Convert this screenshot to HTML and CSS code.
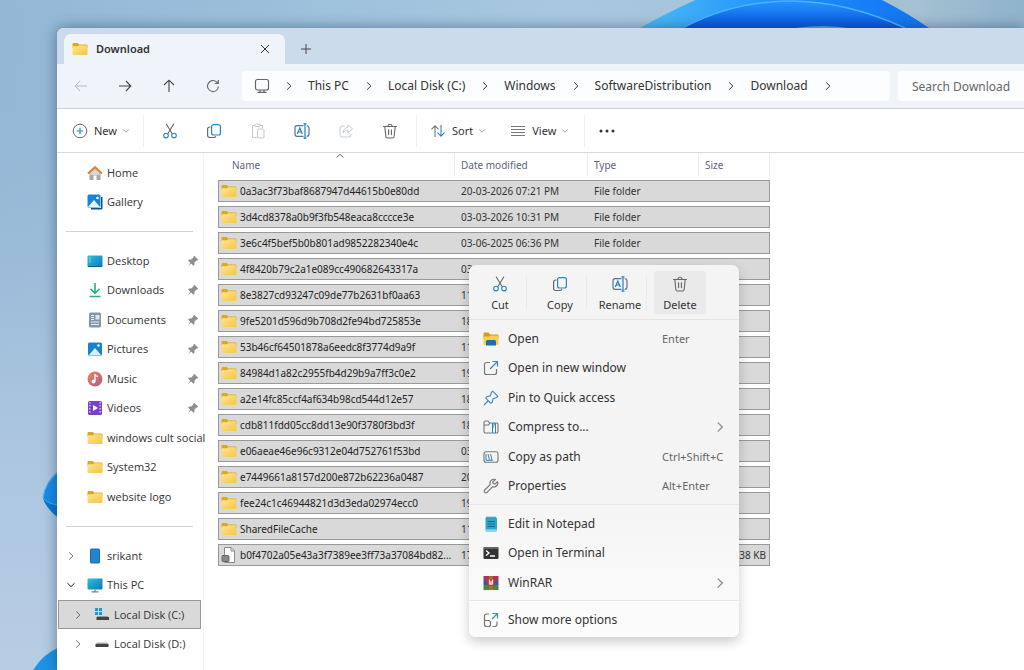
FILE: index.html
```html
<!DOCTYPE html>
<html lang="en">
<head>
<meta charset="utf-8">
<meta name="viewport" content="width=device-width, initial-scale=1">
<title>Download</title>
<link rel="stylesheet" href="styles.css">
</head>
<body>
<svg class="sprite" aria-hidden="true">
  <defs>
    <linearGradient id="g-folder" x1="0" y1="0" x2="1" y2="1"><stop offset="0" stop-color="#ffe590"/><stop offset="1" stop-color="#f6c544"/></linearGradient>
    <linearGradient id="g-blue" x1="0" y1="0" x2="1" y2="1"><stop offset="0" stop-color="#2fc0d8"/><stop offset="1" stop-color="#0b78bf"/></linearGradient>
    <linearGradient id="g-music" x1="0" y1="0" x2="1" y2="1"><stop offset="0" stop-color="#e8895c"/><stop offset="1" stop-color="#b05a88"/></linearGradient>
  </defs>
  <symbol id="folder" viewBox="0 0 16 14"><path d="M0.500 2a1 1 0 0 1 1-1h4.200l1.600 1.600h7.200a1 1 0 0 1 1 1V6H.500z" fill="#dba921"/><path d="M.500 5.200a1 1 0 0 1 1-1H5.800l1.400-1h7.300a1 1 0 0 1 1 1V12a1 1 0 0 1-1 1h-13a1 1 0 0 1-1-1z" fill="url(#g-folder)"/></symbol>
  <symbol id="cut" viewBox="0 0 16 16" fill="none" stroke-width="1.100" stroke-linecap="round"><path d="M4.300 1l5.900 9.700M11.700 1L5.800 10.700" stroke="#666"/><circle cx="4" cy="12.600" r="2.300" stroke="#2887c4"/><circle cx="12" cy="12.600" r="2.300" stroke="#2887c4"/></symbol>
  <symbol id="copy" viewBox="0 0 16 16" fill="none" stroke-width="1.200"><path d="M4.500 4H3.600A2 2 0 0 0 1.600 6v6.500a2 2 0 0 0 2 2H8a2 2 0 0 0 1.800-1.300" stroke="#666"/><rect x="5.600" y="1.600" width="8.800" height="10.400" rx="2" stroke="#2887c4"/></symbol>
  <symbol id="paste" viewBox="0 0 16 16" fill="none" stroke="#c3cbd0"><path d="M5 2.500H2.500v12H7M10 2.500h2.500V5"/><rect x="5" y="1" width="5" height="2.600" rx="1"/><rect x="7.500" y="6" width="6.500" height="9" rx="1"/></symbol>
  <symbol id="rename" viewBox="0 0 16 16" fill="none" stroke-width="1.200"><path d="M9.500 2.700H3a2 2 0 0 0-2 2v6.600a2 2 0 0 0 2 2h6.500M12.700 2.700a2.300 2.300 0 0 1 2.300 2v6.600a2.300 2.300 0 0 1-2.300 2" stroke="#56738a"/><path d="M11 1v14M9.500 .800h3M9.500 15.200h3M3.300 10.900L5.800 5l2.500 5.900M4.200 9h3.200" stroke="#1f7fc4"/></symbol>
  <symbol id="share" viewBox="0 0 16 16" fill="none" stroke="#c3cfd6"><path d="M6.500 3H4a2 2 0 0 0-2 2v7a2 2 0 0 0 2 2h7a2 2 0 0 0 2-2v-1"/><path d="M10 2l4.500 3.800L10 9.500V7.300C7.500 7.300 6 8.200 5 10c.200-3.200 2-5.300 5-5.800z"/></symbol>
  <symbol id="trash" viewBox="0 0 16 16" fill="none" stroke="#666" stroke-width="1.100" stroke-linecap="round"><path d="M1.500 3.500h13M6 3.300a2 2 0 0 1 4 0M2.800 3.700l1.100 10a1.500 1.500 0 0 0 1.500 1.300h5.200a1.500 1.500 0 0 0 1.500-1.300l1.100-10M6.600 6.800v4.800M9.400 6.800v4.800"/></symbol>
  <symbol id="right" viewBox="0 0 8 8" fill="none" stroke="currentColor" stroke-linecap="round"><path d="M2.500.700L5.900 4 2.500 7.300"/></symbol>
  <symbol id="down" viewBox="0 0 8 8" fill="none" stroke="currentColor" stroke-linecap="round"><path d="M.700 2.400L4 5.600l3.300-3.200"/></symbol>
  <symbol id="pin" viewBox="0 0 12 12"><path d="M7.200.700l4.100 4.100-1 .800-.700-.100L7.500 7.600l-.100 2.300-.900.900L4 8.400.800 11.300l2.500-3.500L1.100 5.500l1-.900 2.200-.100 2.200-2.200-.100-.800z" fill="#8b8f93"/></symbol>
</svg>

<svg class="wallpaper" viewBox="0 0 1024 670" preserveAspectRatio="xMinYMin slice" aria-hidden="true">
  <defs>
    <linearGradient id="sky" x1="0" y1="0" x2="1" y2="0"><stop offset="0" stop-color="#93b7d5"/><stop offset=".25" stop-color="#9bbfdb"/><stop offset=".55" stop-color="#a8c8e0"/><stop offset=".9" stop-color="#a4c0d2"/><stop offset="1" stop-color="#8eb3cb"/></linearGradient>
    <linearGradient id="side" x1="0" y1="0" x2="0" y2="1"><stop offset="0" stop-color="#8fb4d3" stop-opacity="0"/><stop offset=".6" stop-color="#a9c4df"/><stop offset="1" stop-color="#b7cde4"/></linearGradient>
    <linearGradient id="p1" x1="0" y1="0" x2="1" y2="0"><stop offset="0" stop-color="#4dbcf6"/><stop offset=".5" stop-color="#1c8dfb"/><stop offset="1" stop-color="#1374f2"/></linearGradient>
    <linearGradient id="p2" x1="0" y1="0" x2="0" y2="1"><stop offset="0" stop-color="#2495ff"/><stop offset="1" stop-color="#0753de"/></linearGradient>
  </defs>
  <rect width="1024" height="670" fill="url(#sky)"/>
  <rect width="60" height="670" fill="url(#side)"/>
  <path d="M640 28Q668 12 700-2H878Q906 12 929 28z" fill="url(#p1)"/>
  <path d="M684 28Q734 1 790 1T905 28z" fill="url(#p2)"/>
  <path d="M684 27Q734 1 790 1T905 28" fill="none" stroke="#48b3ff" stroke-width="1.500"/>
  <path d="M795 28q28-4 53 0z" fill="#55a8fb"/>
  <path d="M60 470Q45 481 43 498q2 9 17 21z" fill="#178be9"/>
  <path d="M43 498q6 7 17 7v14Q47 510 43 498" fill="#0876d2"/>
  <path d="M43 498q6 7 17 7M60 471Q45 482 43 498" fill="none" stroke="#43b4f6"/>
  <path d="M60 647q-18 7-28 25h28z" fill="#1e93e4"/>
</svg>

<main class="window">
  <header class="tabs">
    <div class="tab">
      <svg class="i16"><use href="#folder"/></svg>
      <span class="tab-title">Download</span>
      <button class="plain" aria-label="Close tab"><svg class="i10" viewBox="0 0 10 10"><path d="M1 1l8 8M9 1L1 9" stroke="#333" fill="none"/></svg></button>
    </div>
    <button class="plain new-tab" aria-label="New tab"><svg class="i10" viewBox="0 0 10 10"><path d="M5 0v10M0 5h10" stroke="#444" fill="none"/></svg></button>
  </header>

  <nav class="nav" aria-label="Address">
    <div class="nav-buttons">
      <button class="plain" aria-label="Back" disabled><svg class="i14" viewBox="0 0 14 14"><path d="M13 7H1.500M6 2L1.200 7 6 12" stroke="#b3b9c0" fill="none"/></svg></button>
      <button class="plain" aria-label="Forward"><svg class="i14" viewBox="0 0 14 14"><path d="M1 7h11.500M8 2l4.800 5L8 12" stroke="#444" stroke-width="1.100" fill="none"/></svg></button>
      <button class="plain" aria-label="Up"><svg class="i14" viewBox="0 0 14 14"><path d="M7 13V1.500M2 6l5-4.800L12 6" stroke="#444" stroke-width="1.100" fill="none"/></svg></button>
      <button class="plain" aria-label="Refresh"><svg class="i14" viewBox="0 0 14 14"><path d="M12.500 7.500a5.500 5.500 0 1 1-1.800-4.500l1.300 1.200M12.300 1v3.500H8.800" stroke="#666" stroke-width="1.100" fill="none"/></svg></button>
    </div>
    <div class="address">
      <svg class="i16" viewBox="0 0 16 16"><rect x="1.500" y="1.500" width="13" height="10.500" rx="2" fill="none" stroke="#666" stroke-width="1.200"/><path d="M3.500 14.300h9M6 12v2M10 12v2" stroke="#666" stroke-width="1.200"/></svg>
      <svg class="i8"><use href="#right"/></svg><a href="#">This PC</a>
      <svg class="i8"><use href="#right"/></svg><a href="#">Local Disk (C:)</a>
      <svg class="i8"><use href="#right"/></svg><a href="#">Windows</a>
      <svg class="i8"><use href="#right"/></svg><a href="#">SoftwareDistribution</a>
      <svg class="i8"><use href="#right"/></svg><a href="#">Download</a>
      <svg class="i8"><use href="#right"/></svg>
    </div>
    <input class="search" type="search" placeholder="Search Download" aria-label="Search Download">
  </nav>

  <div class="toolbar" role="toolbar" aria-label="Commands">
    <div class="tool-group new-group">
      <button class="plain labelled"><svg class="i16" viewBox="0 0 16 16" fill="none"><circle cx="8" cy="8" r="6.800" stroke="#666"/><path d="M8 4.800v6.400M4.800 8h6.400" stroke="#2887c4" stroke-width="1.200"/></svg>New<svg class="i6"><use href="#down"/></svg></button>
    </div>
    <div class="tool-group icon-group">
      <button class="plain" aria-label="Cut"><svg class="i16"><use href="#cut"/></svg></button>
      <button class="plain" aria-label="Copy"><svg class="i16"><use href="#copy"/></svg></button>
      <button class="plain" aria-label="Paste" disabled><svg class="i16"><use href="#paste"/></svg></button>
      <button class="plain" aria-label="Rename"><svg class="i16"><use href="#rename"/></svg></button>
      <button class="plain" aria-label="Share" disabled><svg class="i16"><use href="#share"/></svg></button>
      <button class="plain" aria-label="Delete"><svg class="i16"><use href="#trash"/></svg></button>
    </div>
    <div class="tool-group view-group">
      <button class="plain labelled"><svg class="i16" viewBox="0 0 16 16" fill="none"><path d="M5 14V3M1.500 6.300L5 2.800l3.500 3.500" stroke="#777" stroke-width="1.100"/><path d="M11 2v11M7.500 9.700L11 13.200l3.500-3.500" stroke="#2887c4" stroke-width="1.100"/></svg>Sort<svg class="i6"><use href="#down"/></svg></button>
      <button class="plain labelled"><svg class="i16" viewBox="0 0 16 16"><path d="M1 3.500h14M1 6.500h14M1 9.500h14M1 12.500h14" stroke="#777"/></svg>View<svg class="i6"><use href="#down"/></svg></button>
    </div>
    <button class="plain more" aria-label="See more"><svg class="i16" viewBox="0 0 16 16" fill="#333"><circle cx="2" cy="8" r="1.500"/><circle cx="8" cy="8" r="1.500"/><circle cx="14" cy="8" r="1.500"/></svg></button>
  </div>

  <div class="body">
    <nav class="sidebar" aria-label="Places">
      <ul>
        <li><svg class="i16" viewBox="0 0 16 16"><path d="M2.500 8L8 3l5.500 5v7h-4v-4.500h-3V15h-4z" fill="#a5a8ac"/><path d="M3.500 7.500L8 4l4.500 3.500V10h-9z" fill="#d5d7d9"/><path d="M1 8.600L8 2.200l7 6.400" fill="none" stroke="#dc843c" stroke-width="2"/></svg><a href="#">Home</a></li>
        <li><svg class="i16" viewBox="0 0 16 16"><path d="M14 3h1.500v11a1.500 1.500 0 0 1-1.500 1.500H4V14h10z" fill="#174f80"/><rect x=".500" y=".500" width="13" height="13" rx="1.500" fill="#1685d2"/><path d="M1 13l6-7 6 7z" fill="#e8f5fc"/><circle cx="10.500" cy="4" r="1.300" fill="#fff"/></svg><a href="#">Gallery</a></li>
      </ul>
      <hr>
      <ul>
        <li><svg class="i16" viewBox="0 0 16 16"><rect x=".500" y="2.500" width="15" height="11.500" rx="1" fill="url(#g-blue)"/><path d="M2.500 5h1M2.500 7h1M2.500 9h1" stroke="#d5f3f8"/><path d="M1 13.500h14" stroke="#096391"/></svg><a href="#">Desktop</a><svg class="i12"><use href="#pin"/></svg></li>
        <li><svg class="i16" viewBox="0 0 16 16"><path d="M8 1v10M3.500 6.800L8 11.300l4.500-4.500M2.500 14.500h11" fill="none" stroke="#29ad8b" stroke-width="1.600"/></svg><a href="#">Downloads</a><svg class="i12"><use href="#pin"/></svg></li>
        <li><svg class="i16" viewBox="0 0 16 16"><rect x="2" y=".500" width="12" height="15" rx="1.500" fill="#8397ab"/><path d="M4 3.500h3M4 5.500h3M4 7.500h3M4 10h8M4 12.500h8" stroke="#e7edf3"/><rect x="8.500" y="3" width="4" height="4.500" fill="#dbe7ef"/></svg><a href="#">Documents</a><svg class="i12"><use href="#pin"/></svg></li>
        <li><svg class="i16" viewBox="0 0 16 16"><rect x="1" y="1.500" width="14" height="13" rx="1.500" fill="#1683cc"/><path d="M2 14l6-7 6 7z" fill="#dcf0fa"/><circle cx="11.500" cy="4.500" r="1.300" fill="#fff"/></svg><a href="#">Pictures</a><svg class="i12"><use href="#pin"/></svg></li>
        <li><svg class="i16" viewBox="0 0 16 16"><circle cx="8" cy="8" r="7.500" fill="url(#g-music)"/><path d="M8 3v7.500M8 3.500q1 1.800 3 2" stroke="#fff" stroke-width="1.300" fill="none"/><circle cx="6.500" cy="10.500" r="1.900" fill="#fff"/></svg><a href="#">Music</a><svg class="i12"><use href="#pin"/></svg></li>
        <li><svg class="i16" viewBox="0 0 16 16"><rect x="1" y="1" width="14" height="14" rx="1.500" fill="#7b42c9"/><path d="M2.800 2v12M13.200 2v12" stroke="#d4b8f5" stroke-width="1.500" stroke-dasharray="1.500 1.500"/><path d="M6 5l5 3-5 3z" fill="#fff"/></svg><a href="#">Videos</a><svg class="i12"><use href="#pin"/></svg></li>
        <li><svg class="i16"><use href="#folder"/></svg><a href="#">windows cult social</a></li>
        <li><svg class="i16"><use href="#folder"/></svg><a href="#">System32</a></li>
        <li><svg class="i16"><use href="#folder"/></svg><a href="#">website logo</a></li>
      </ul>
      <hr>
      <ul class="tree">
        <li><svg class="i8"><use href="#right"/></svg><svg class="i16" viewBox="0 0 16 16"><rect x="3" y=".500" width="10" height="15" rx="1.500" fill="#176cae"/><rect x="4" y="1.500" width="8" height="13" fill="#2385d0"/></svg><a href="#">srikant</a></li>
        <li><svg class="i8 open"><use href="#down"/></svg><svg class="i16" viewBox="0 0 16 16"><rect x=".500" y="1.500" width="15" height="11" rx="1" fill="url(#g-blue)"/><path d="M8 12.500v2M4.500 14.800h7" stroke="#5792b1" stroke-width="1.200"/></svg><a href="#">This PC</a></li>
        <li class="drive selected"><svg class="i8"><use href="#right"/></svg><svg class="i16" viewBox="0 0 16 16"><path d="M1 1h3v3H1zM5 1h3v3H5zM1 5h3v3H1zM5 5h3v3H5z" fill="#2495cd"/><path d="M3.500 9h10l1 1.500h-12z" fill="#999"/><path d="M2.500 10h12.500v3H2.500z" fill="#444"/></svg><a href="#">Local Disk (C:)</a></li>
        <li class="drive"><svg class="i8"><use href="#right"/></svg><svg class="i16" viewBox="0 0 16 16"><path d="M3 6.500h10l1.500 2h-13z" fill="#aaa"/><path d="M1.500 8h13v3h-13z" fill="#444"/></svg><a href="#">Local Disk (D:)</a></li>
      </ul>
    </nav>

    <section class="files">
      <table>
        <colgroup><col class="c-name"><col class="c-date"><col class="c-type"><col class="c-size"></colgroup>
        <thead><tr><th scope="col">Name<svg class="i8 sort" viewBox="0 0 8 8"><path d="M.500 5.500L4 2.300l3.500 3.200" fill="none" stroke="#666"/></svg></th><th scope="col">Date modified</th><th scope="col">Type</th><th scope="col">Size</th></tr></thead>
        <tbody>
          <tr><td><span><svg class="i16"><use href="#folder"/></svg>0a3ac3f73baf8687947d44615b0e80dd</span></td><td>20-03-2026 07:21 PM</td><td>File folder</td><td></td></tr>
          <tr><td><span><svg class="i16"><use href="#folder"/></svg>3d4cd8378a0b9f3fb548eaca8cccce3e</span></td><td>03-03-2026 10:31 PM</td><td>File folder</td><td></td></tr>
          <tr><td><span><svg class="i16"><use href="#folder"/></svg>3e6c4f5bef5b0b801ad9852282340e4c</span></td><td>03-06-2025 06:36 PM</td><td>File folder</td><td></td></tr>
          <tr><td><span><svg class="i16"><use href="#folder"/></svg>4f8420b79c2a1e089cc490682643317a</span></td><td>03</td><td></td><td></td></tr>
          <tr><td><span><svg class="i16"><use href="#folder"/></svg>8e3827cd93247c09de77b2631bf0aa63</span></td><td>11</td><td></td><td></td></tr>
          <tr><td><span><svg class="i16"><use href="#folder"/></svg>9fe5201d596d9b708d2fe94bd725853e</span></td><td>18</td><td></td><td></td></tr>
          <tr><td><span><svg class="i16"><use href="#folder"/></svg>53b46cf64501878a6eedc8f3774d9a9f</span></td><td>11</td><td></td><td></td></tr>
          <tr><td><span><svg class="i16"><use href="#folder"/></svg>84984d1a82c2955fb4d29b9a7ff3c0e2</span></td><td>19</td><td></td><td></td></tr>
          <tr><td><span><svg class="i16"><use href="#folder"/></svg>a2e14fc85ccf4af634b98cd544d12e57</span></td><td>18</td><td></td><td></td></tr>
          <tr><td><span><svg class="i16"><use href="#folder"/></svg>cdb811fdd05cc8dd13e90f3780f3bd3f</span></td><td>18</td><td></td><td></td></tr>
          <tr><td><span><svg class="i16"><use href="#folder"/></svg>e06aeae46e96c9312e04d752761f53bd</span></td><td>03</td><td></td><td></td></tr>
          <tr><td><span><svg class="i16"><use href="#folder"/></svg>e7449661a8157d200e872b62236a0487</span></td><td>20</td><td></td><td></td></tr>
          <tr><td><span><svg class="i16"><use href="#folder"/></svg>fee24c1c46944821d3d3eda02974ecc0</span></td><td>19</td><td></td><td></td></tr>
          <tr><td><span><svg class="i16"><use href="#folder"/></svg>SharedFileCache</span></td><td>11</td><td></td><td></td></tr>
          <tr><td><span><svg class="i16" viewBox="0 0 16 16"><path d="M3.500.500H10L13.500 4v11.500h-10z" fill="#fff" stroke="#888"/><path d="M10 .500V4h3.500" fill="none" stroke="#888"/><rect x="1" y="8.500" width="7" height="6" rx="1" fill="#888" stroke="#666"/></svg>b0f4702a05e43a3f7389ee3ff73a37084bd82...</span></td><td>17</td><td></td><td>38 KB</td></tr>
        </tbody>
      </table>
    </section>
  </div>

  <div class="menu" role="menu">
    <div class="menu-actions">
      <button><svg class="i16"><use href="#cut"/></svg>Cut</button>
      <button><svg class="i16"><use href="#copy"/></svg>Copy</button>
      <button><svg class="i16"><use href="#rename"/></svg>Rename</button>
      <button class="hover"><svg class="i16"><use href="#trash"/></svg>Delete</button>
    </div>
    <div class="menu-list">
      <button><svg class="i16" viewBox="0 0 16 16"><path d="M.500 2.500a1 1 0 0 1 1-1h4l1.500 2h7.500a1 1 0 0 1 1 1V8H.500z" fill="#cf9a1d"/><path d="M.500 5.500H6l1.500-1h8V13a1 1 0 0 1-1 1h-13a1 1 0 0 1-1-1z" fill="#fbcf45"/><path d="M3 14.500v-4a1.500 1.500 0 0 1 1.500-1.500h7A1.500 1.500 0 0 1 13 10.500v4z" fill="#1b6fae"/></svg><span>Open</span><kbd>Enter</kbd></button>
      <button><svg class="i16" viewBox="0 0 16 16" fill="none"><path d="M7 2.500H3.500a2 2 0 0 0-2 2v8a2 2 0 0 0 2 2h8a2 2 0 0 0 2-2V9" stroke="#777" stroke-width="1.200"/><path d="M9.500 1.500h5v5M14.500 1.500L7 9" stroke="#3c88ba" stroke-width="1.200"/></svg><span>Open in new window</span></button>
      <button><svg class="i16" viewBox="0 0 16 16" fill="none"><path d="M9.700 1.200l5.100 5.100-1.200 1.200-3.500 1.300-.800 3.300-1.500 1.200-5.100-5.100 1.200-1.500 3.300-.800 1.300-3.500zM5 11l-4 4" stroke="#3f86bb" stroke-width="1.100" stroke-linejoin="round"/></svg><span>Pin to Quick access</span></button>
      <button><svg class="i16" viewBox="0 0 16 16" fill="none"><path d="M9 14H2.500A1.500 1.500 0 0 1 1 12.500v-9A1.500 1.500 0 0 1 2.500 2H5l1.500 2H9M1 6h4.500l1.300-1.800M12.500 4h1A1.500 1.500 0 0 1 15 5.500v7a1.500 1.500 0 0 1-1.500 1.500h-1" stroke="#777" stroke-width="1.100"/><path d="M9.500 4h3v10h-3zM11 4v3M9.500 8h1.500" stroke="#2f85c2"/></svg><span>Compress to...</span><svg class="i10 arrow"><use href="#right"/></svg></button>
      <button><svg class="i16" viewBox="0 0 16 16" fill="none"><rect x="1" y="2.700" width="14" height="10.600" rx="2" stroke="#777" stroke-width="1.100"/><path d="M3 5v6.300M5 5l1.500 6M7.500 5L9 11M3 11.300h7" stroke="#2f85c2"/></svg><span>Copy as path</span><kbd>Ctrl+Shift+C</kbd></button>
      <button><svg class="i16" viewBox="0 0 16 16" fill="none"><path d="M12.500 1.600a4 4 0 0 0-5.300 5L1.700 12a1.600 1.600 0 0 0 2.300 2.300l5.500-5.500a4 4 0 0 0 5-5.200l-2.400 2.300-1.900-.300-.400-1.800z" stroke="#777" stroke-width="1.200" stroke-linejoin="round"/></svg><span>Properties</span><kbd>Alt+Enter</kbd></button>
    </div>
    <div class="menu-list">
      <button><svg class="i16" viewBox="0 0 16 16"><rect x="2.500" y="1.500" width="11.500" height="14" rx="1" fill="#2fa7cb"/><path d="M4 .500v2M6 .500v2M8 .500v2M10 .500v2M12 .500v2" stroke="#1680a8"/><path d="M4.500 5.500h7.500M4.500 8h7.500M4.500 10.500h7.500" stroke="#126a90"/><path d="M3 13.500h11V15H3z" fill="#98d7ea"/></svg><span>Edit in Notepad</span></button>
      <button><svg class="i16" viewBox="0 0 16 16"><rect x=".500" y="2" width="15" height="12" rx="1" fill="#333"/><path d="M.500 3h15" stroke="#999"/><path d="M3 5.500L6 8l-3 2.500M7 11h5" stroke="#fff" stroke-width="1.300" fill="none"/></svg><span>Open in Terminal</span></button>
      <button><svg class="i16" viewBox="0 0 16 16"><path d="M.500 1h15v5H.500z" fill="#ad3458"/><path d="M.500 6h15v4H.500z" fill="#3459a5"/><path d="M.500 10h15v5H.500z" fill="#3c8b43"/><path d="M6 1h4v14H6z" fill="#b8672c"/><rect x="4.500" y="4" width="7" height="7" rx="1" fill="#c93a35"/><path d="M6.500 4.500v4.500h3V4.500M8 6v4" fill="none" stroke="#f4e6c4" stroke-width="1.200"/></svg><span>WinRAR</span><svg class="i10 arrow"><use href="#right"/></svg></button>
    </div>
    <div class="menu-list">
      <button><svg class="i16" viewBox="0 0 16 16" fill="none"><path d="M6 2H3.500A2 2 0 0 0 1.500 4v8.500a2 2 0 0 0 2 2h2a2 2 0 0 0 2-2v-2a2 2 0 0 0-2-2h-4M14 9.500V12a2.500 2.500 0 0 1-2.500 2.500h-2" stroke="#777" stroke-width="1.200"/><path d="M9.500 1.500h5v5M14.500 1.500L9 7" stroke="#3591aa" stroke-width="1.200"/></svg><span>Show more options</span></button>
    </div>
  </div>
</main>
</body>
</html>
```

FILE: styles.css
```css
* { box-sizing: border-box; }

body {
  margin: 0;
  height: 100vh;
  overflow: hidden;
  display: flex;
  font-family: "Noto Sans", "Open Sans", sans-serif;
  font-size: 11px;
  line-height: 16px;
  color: #333;
}

svg { flex: none; display: block; }
a { color: inherit; text-decoration: none; }
button { font: inherit; color: inherit; border: 0; background: none; padding: 0; }
.plain { display: flex; align-items: center; justify-content: center; }

.sprite { position: absolute; width: 0; height: 0; }
.wallpaper { position: absolute; inset: 0; width: 100%; height: 100%; z-index: -1; }

.i6 { width: 6px; height: 6px; }
.i8 { width: 8px; height: 8px; }
.i10 { width: 10px; height: 10px; }
.i12 { width: 12px; height: 12px; }
.i14 { width: 14px; height: 14px; }
.i16 { width: 16px; height: 16px; }

.window {
  position: relative;
  flex: 1;
  min-width: 0;
  margin: 28px 0 0 57px;
  display: flex;
  flex-direction: column;
  background: #fff;
  border-radius: 7px 0 0 0;
  box-shadow: 0 0 14px rgba(20, 45, 75, .5);
}

/* Tab strip */
.tabs {
  display: flex;
  align-items: flex-end;
  height: 36px;
  padding-left: 7px;
  background: #cbdbeb;
  border-radius: 7px 0 0 0;
}
.tab {
  display: flex;
  align-items: center;
  gap: 8px;
  width: 221px;
  height: 30px;
  padding: 0 15px 0 8px;
  background: #eff4fb;
  border-radius: 7px 7px 0 0;
}
.tab-title { flex: 1; font-weight: 600; }
.new-tab { width: 42px; height: 30px; }

/* Address row */
.nav {
  display: flex;
  align-items: center;
  height: 45px;
  background: #eff4fb;
  border-bottom: 1px solid #ccd4de;
  font-size: 12px;
}
.nav-buttons { display: flex; gap: 30px; padding: 0 22px 0 17px; }
.address {
  flex: 1;
  min-width: 0;
  display: flex;
  align-items: center;
  height: 30px;
  padding: 0 12px;
  gap: 15px;
  background: #fbfdff;
  border-radius: 4px;
  white-space: nowrap;
  overflow: hidden;
}
.address a { margin-right: 1px; }
.search {
  width: 126px;
  height: 30px;
  margin-left: 8px;
  padding: 0 0 0 14px;
  border: 0;
  border-radius: 4px 0 0 4px;
  background: #fbfdff;
  font: inherit;
}
.search::placeholder { color: #666; opacity: 1; }

/* Command bar */
.toolbar {
  display: flex;
  align-items: center;
  height: 44px;
  border-bottom: 1px solid #d9d9d9;
}
.tool-group {
  display: flex;
  align-items: center;
  height: 32px;
  border-right: 1px solid #eee;
}
.labelled { gap: 6px; }
.new-group { padding: 0 14px 0 15px; }
.icon-group { gap: 28px; padding: 0 18px; }
.view-group { gap: 25px; padding: 0 16px 0 13px; }
.more { margin-left: 14px; }
.i6 { color: #888; }

/* Sidebar */
.body { flex: 1; min-height: 0; display: flex; }
.sidebar {
  width: 147px;
  padding: 5px 2px 0 1px;
  border-right: 1px solid #f5f5f5;
  font-family: "Open Sans", "Noto Sans", sans-serif;
}
.sidebar ul { list-style: none; margin: 0; padding: 0; }
.sidebar li {
  display: flex;
  align-items: center;
  gap: 4px;
  height: 29px;
  padding: 0 1px 0 29px;
  white-space: nowrap;
}
.sidebar li:nth-child(even) { margin-bottom: 1px; }
.sidebar li .i12 { margin: 0 1px 0 auto; }
.sidebar hr { border: 0; border-top: 1px solid #d2d2d2; margin: 15px 8px 14px; }
.sidebar .tree li { padding-left: 9px; }
.sidebar .tree .i16 { margin-left: 8px; }
.tree .i8 { color: #666; }
.tree .open { color: #222; }
.sidebar .tree .drive { padding-left: 16px; }
.tree .drive.selected { background: #d9d9d9; outline: 1px solid #999; outline-offset: -1px; }

/* File list */
.files { flex: 1; min-width: 0; padding-left: 14px; }
table { width: 552px; table-layout: fixed; border-collapse: separate; border-spacing: 0 4px; margin-top: -4px; }
.c-name { width: 237px; }
.c-date { width: 133px; }
.c-type { width: 111px; }
th {
  height: 23px;
  padding: 0 6px;
  border-right: 1px solid #ececec;
  text-align: left;
  font-weight: 400;
  font-size: 10px;
  color: #59647c;
}
th:first-child { position: relative; padding-left: 14px; }
.sort { position: absolute; top: -1px; left: 50%; }
td {
  height: 22px;
  padding: 0 6px;
  background: #d9d9d9;
  border: solid #999;
  border-width: 1px 0;
  font-size: 10px;
  line-height: 14px;
  white-space: nowrap;
}
td:first-child { border-left-width: 1px; padding: 0 0 0 2px; color: #222; }
td:last-child { border-right-width: 1px; padding: 0 3px; text-align: right; }
td span { display: flex; align-items: center; gap: 3px; }

/* Context menu */
.menu {
  position: absolute;
  left: 412px;
  top: 237px;
  width: 270px;
  background: linear-gradient(#f4f4f4 60%, #fcfcfc);
  border-radius: 7px;
  box-shadow: 0 5px 12px rgba(0, 0, 0, .2);
}
.menu-actions { display: flex; gap: 8px; padding: 6px 5px 5px; border-bottom: 1px solid #e4e4e4; }
.menu-actions button {
  display: flex;
  flex-direction: column;
  align-items: center;
  gap: 5px;
  width: 52px;
  height: 43px;
  padding-top: 5px;
  border-radius: 3px;
  font-size: 11px;
  line-height: 16px;
}
.menu-actions button:not(.hover) { box-shadow: 5px 0 0 -4px #ebebeb; }
.menu-actions .hover { background: #eaeaea; }
.menu-list { padding: 4px 0 3px; font-size: 12px; }
.menu-list + .menu-list { border-top: 1px solid #e6e6e6; }
.menu-list button {
  display: flex;
  align-items: center;
  gap: 9px;
  width: 100%;
  height: 29px;
  padding: 0 14px;
  text-align: left;
}
.menu-list button:nth-child(even) { margin-bottom: 1px; }
.menu-list span { flex: 1; }
kbd { width: 63px; font-family: inherit; font-size: 11px; color: #666; white-space: nowrap; }
.arrow { color: #888; }
```
